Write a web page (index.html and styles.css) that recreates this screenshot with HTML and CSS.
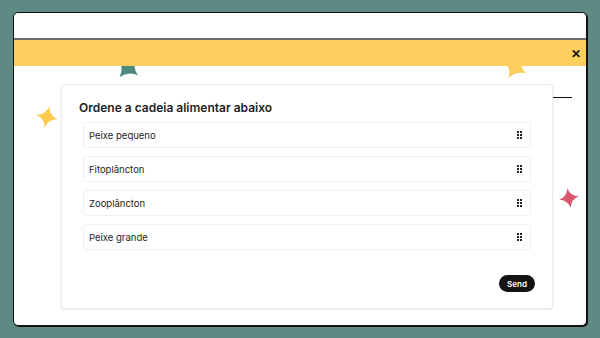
FILE: index.html
```html
<!DOCTYPE html>
<html>
<head>
    <title>Ordene a cadeia alimentar</title>
    <link rel="stylesheet" href="styles.css">
</head>
<body>
    <div class="window">
        <div class="window-top"></div>
        <div class="banner">
            <span class="close">&#x2715;</span>
        </div>
        <div class="content">
            <!-- decorative stars -->
            <svg class="star star-teal" viewBox="0 0 24 24"><path d="M12 0 Q14.5 9.5 24 12 Q14.5 14.5 12 24 Q9.5 14.5 0 12 Q9.5 9.5 12 0Z"/></svg>
            <svg class="star star-yellow-top" viewBox="0 0 24 24"><path d="M12 0 Q14.5 9.5 24 12 Q14.5 14.5 12 24 Q9.5 14.5 0 12 Q9.5 9.5 12 0Z"/></svg>
            <svg class="star star-yellow-left" viewBox="0 0 24 24"><path d="M12 0 Q14 10 24 12 Q14 14 12 24 Q10 14 0 12 Q10 10 12 0Z"/></svg>
            <svg class="star star-red" viewBox="0 0 24 24"><path d="M12 0 Q14 10 24 12 Q14 14 12 24 Q10 14 0 12 Q10 10 12 0Z"/></svg>
            <span class="rule"></span>

            <div class="card">
                <h2>Ordene a cadeia alimentar abaixo</h2>
                <ul class="order-list">
                    <li><span>Peixe pequeno</span><span class="grip"><i></i><i></i><i></i><i></i><i></i><i></i></span></li>
                    <li><span>Fitoplâncton</span><span class="grip"><i></i><i></i><i></i><i></i><i></i><i></i></span></li>
                    <li><span>Zooplâncton</span><span class="grip"><i></i><i></i><i></i><i></i><i></i><i></i></span></li>
                    <li><span>Peixe grande</span><span class="grip"><i></i><i></i><i></i><i></i><i></i><i></i></span></li>
                </ul>
                <div class="actions">
                    <button class="send">Send</button>
                </div>
            </div>
        </div>
    </div>
</body>
</html>
```

FILE: styles.css
```css
body {
    margin: 0;
    padding: 12px 13px;
    background-color: #5d8b84;
    font-family: Inter, "Noto Sans", sans-serif;
    color: #1e1e1e;
}
.window {
    height: 312px;
    background-color: #fff;
    border: 1px solid #111;
    border-radius: 5px;
    box-shadow: 1px 1px 0 #111;
    overflow: hidden;
    display: flex;
    flex-direction: column;
}
.window-top {
    height: 25px;
    border-bottom: 2px solid #6b6b6b;
}
.banner {
    position: relative;
    z-index: 2;
    height: 26px;
    background-color: #fecf5f;
    display: flex;
    align-items: center;
    justify-content: flex-end;
    padding-right: 5px;
}
.close {
    font-size: 12px;
    font-weight: 700;
    color: #111;
}
.content {
    position: relative;
    flex: 1;
    padding: 18px 0 0 47px;
}
.star {
    position: absolute;
    z-index: 1;
}
.star-teal {
    left: 101px;
    top: -12px;
    width: 26px;
    height: 26px;
    fill: #4f8a80;
    transform: rotate(40deg);
}
.star-yellow-top {
    left: 488px;
    top: -12px;
    width: 26px;
    height: 26px;
    fill: #fecf5f;
    transform: rotate(30deg);
}
.star-yellow-left {
    left: 22px;
    top: 40px;
    width: 22px;
    height: 22px;
    fill: #fdc94f;
    transform: rotate(12deg);
}
.star-red {
    left: 545px;
    top: 122px;
    width: 20px;
    height: 20px;
    fill: #d95870;
    transform: rotate(-10deg);
}
.rule {
    position: absolute;
    left: 537px;
    top: 31px;
    width: 21px;
    height: 1px;
    background-color: #111;
}
.card {
    position: relative;
    z-index: 2;
    width: 456px;
    height: 208px;
    padding: 15px 17px 0 17px;
    background-color: #fff;
    border: 1px solid #ececec;
    border-radius: 3px;
    box-shadow: 0 1px 2px rgba(0,0,0,0.08);
    display: flex;
    flex-direction: column;
}
.card h2 {
    margin: 0;
    font-size: 12px;
    font-weight: 600;
    line-height: 16px;
}
.order-list {
    list-style: none;
    margin: 6px 4px 0 4px;
    padding: 0;
    display: flex;
    flex-direction: column;
    gap: 8px;
}
.order-list li {
    height: 24px;
    padding: 0 8px 0 5px;
    border: 1px solid #efefef;
    border-radius: 3px;
    display: flex;
    align-items: center;
    justify-content: space-between;
    font-size: 9.5px;
}
.grip {
    display: grid;
    grid-template-columns: repeat(2, 2px);
    gap: 1px;
}
.grip i {
    width: 2px;
    height: 2px;
    background-color: #222;
}
.actions {
    margin-top: auto;
    margin-bottom: 16px;
    display: flex;
    justify-content: flex-end;
}
.send {
    width: 36px;
    height: 17px;
    padding: 0;
    border: none;
    border-radius: 9px;
    background-color: #141414;
    color: #fff;
    font-family: Inter, "Noto Sans", sans-serif;
    font-size: 8px;
    font-weight: 600;
}
```
